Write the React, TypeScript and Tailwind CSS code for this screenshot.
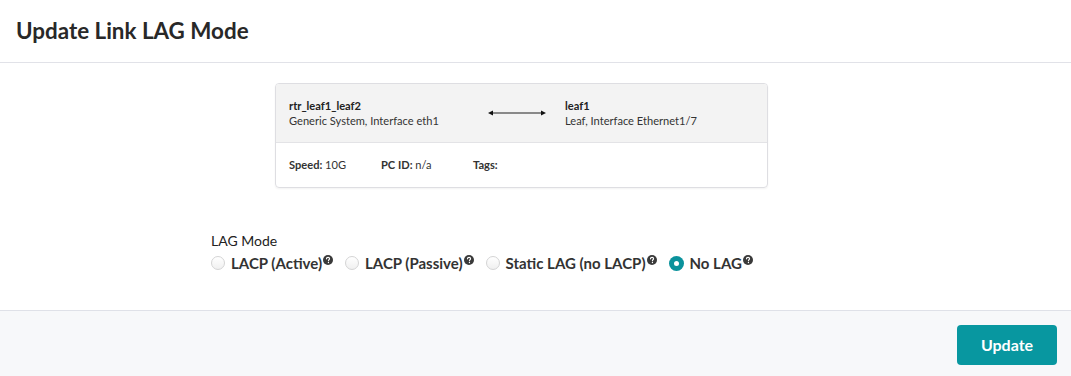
const options = [
  { label: "LACP (Active)", checked: false },
  { label: "LACP (Passive)", checked: false },
  { label: "Static LAG (no LACP)", checked: false },
  { label: "No LAG", checked: true },
];

const HelpIcon = () => (
  <svg viewBox="0 0 16 16" className="ml-[1px] mt-[-7px] h-[10px] w-[10px]">
    <circle cx="8" cy="8" r="8" fill="#3a3a3a" />
    <path
      d="M5.6 6.1c0-1.4 1-2.3 2.5-2.3s2.4.9 2.4 2.1c0 1.6-1.8 1.7-1.8 3.2"
      fill="none"
      stroke="#fff"
      strokeWidth="1.8"
      strokeLinecap="round"
    />
    <circle cx="8.7" cy="12" r="1.1" fill="#fff" />
  </svg>
);

const Radio = ({ checked }: { checked: boolean }) =>
  checked ? (
    <span className="flex h-[15px] w-[15px] items-center justify-center rounded-full bg-[#0a929c]">
      <span className="h-[5px] w-[5px] rounded-full bg-white" />
    </span>
  ) : (
    <span className="h-[14px] w-[14px] rounded-full border border-[#d4d4d5] bg-gradient-to-b from-white to-[#f0f0f0]" />
  );

const Arrow = () => (
  <svg width="58" height="8" viewBox="0 0 58 8">
    <line x1="3" y1="4" x2="55" y2="4" stroke="#666" strokeWidth="1.5" />
    <path d="M0 4 L5 1.5 L5 6.5 Z" fill="#111" />
    <path d="M58 4 L53 1.5 L53 6.5 Z" fill="#111" />
  </svg>
);

export default function App() {
  return (
    <div className="flex h-[376px] w-[1071px] flex-col bg-white font-['Lato','Noto_Sans',sans-serif] text-[#333]">
      <div className="flex h-[63px] items-center border-b border-[#e1e2e8] px-4">
        <h1 className="text-[22.4px] font-bold text-[#282828]">Update Link LAG Mode</h1>
      </div>

      <div className="flex flex-1 flex-col pt-5">
        <div className="ml-[275px] w-[493px] overflow-hidden rounded-[4px] border border-[#dedee2] shadow-[0_1px_2px_rgba(0,0,0,0.05)]">
          <div className="flex h-[59px] items-center border-b border-[#e3e3e6] bg-[#f3f3f3] px-[13px] text-[11.1px] leading-[15px]">
            <div className="w-[199px]">
              <div className="font-bold text-[#222]">rtr_leaf1_leaf2</div>
              <div>Generic System, Interface eth1</div>
            </div>
            <Arrow />
            <div className="ml-[19px]">
              <div className="font-bold text-[#222]">leaf1</div>
              <div>Leaf, Interface Ethernet1/7</div>
            </div>
          </div>
          <div className="flex h-[44px] items-center px-[13px] text-[11.1px]">
            <div className="w-[92px]">
              <span className="font-bold">Speed:</span> 10G
            </div>
            <div className="w-[92px]">
              <span className="font-bold">PC ID:</span> n/a
            </div>
            <div>
              <span className="font-bold">Tags:</span>
            </div>
          </div>
        </div>

        <div className="ml-[211px] mt-[44px]">
          <div className="text-[14px] leading-[18px] text-[#222]">LAG Mode</div>
          <div className="mt-[2px] flex items-center gap-[12px]">
            {options.map((o) => (
              <label key={o.label} className="flex items-center">
                <Radio checked={o.checked} />
                <span className="ml-[6px] text-[15px] font-bold text-[#333]">{o.label}</span>
                <HelpIcon />
              </label>
            ))}
          </div>
        </div>
      </div>

      <div className="flex h-[66px] items-center justify-end border-t border-[#dfe1e8] bg-[#f7f8fa] pr-[14px]">
        <button className="mt-[2px] h-[40px] w-[100px] rounded-[4px] bg-[#0897a0] text-[16px] font-bold text-white">
          Update
        </button>
      </div>
    </div>
  );
}
